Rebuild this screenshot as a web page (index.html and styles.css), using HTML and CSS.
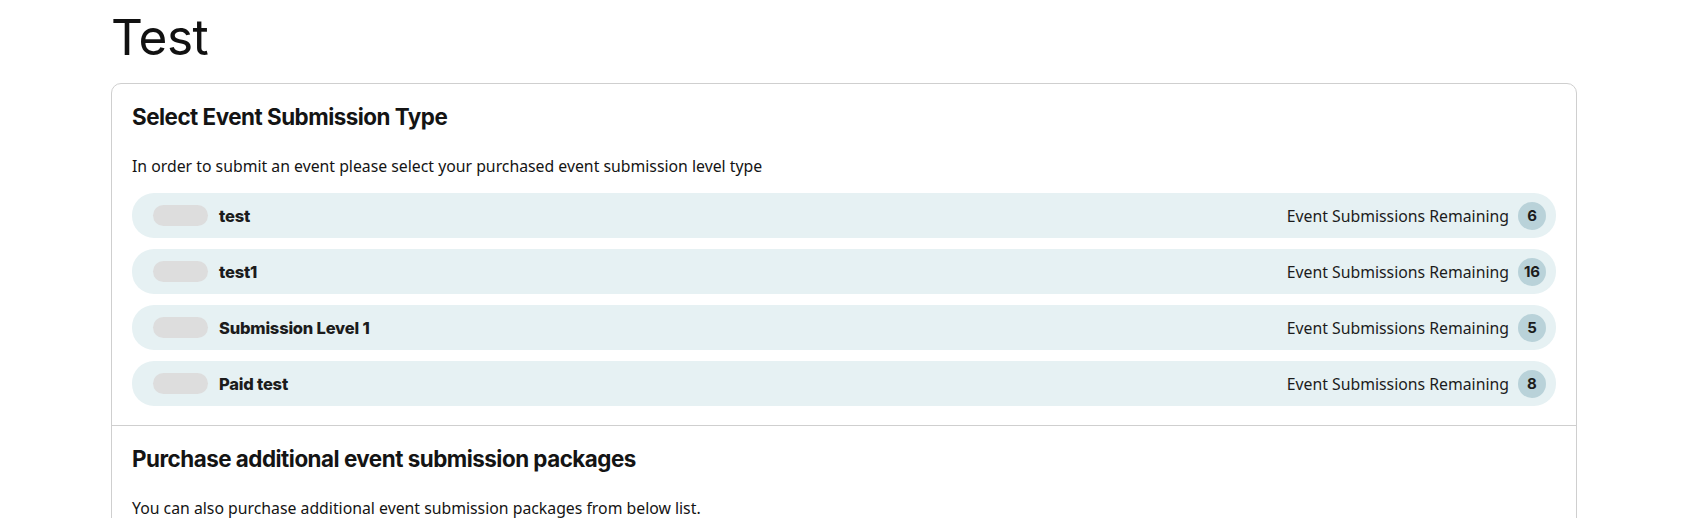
FILE: index.html
```html
<!DOCTYPE html>
<html lang="en">

<head>
  <meta charset="UTF-8" />
  <meta name="viewport" content="width=device-width, initial-scale=1" />
  <title>Test - Event Submission</title>
  <link rel="stylesheet" href="styles.css">
</head>

<body>

  <div class="page">
    <h1 class="page-title">Test</h1>

    <div class="card">
      <!-- Submission types -->
      <section class="card-section">
        <h2>Select Event Submission Type</h2>
        <p>In order to submit an event please select your purchased event submission level type</p>

        <div class="levels">
          <div class="level">
            <span class="toggle"></span>
            <span class="level-name">test</span>
            <span class="remaining">Event Submissions Remaining</span>
            <span class="count">6</span>
          </div>
          <div class="level">
            <span class="toggle"></span>
            <span class="level-name">test1</span>
            <span class="remaining">Event Submissions Remaining</span>
            <span class="count">16</span>
          </div>
          <div class="level">
            <span class="toggle"></span>
            <span class="level-name">Submission Level 1</span>
            <span class="remaining">Event Submissions Remaining</span>
            <span class="count">5</span>
          </div>
          <div class="level">
            <span class="toggle"></span>
            <span class="level-name">Paid test</span>
            <span class="remaining">Event Submissions Remaining</span>
            <span class="count">8</span>
          </div>
        </div>
      </section>

      <!-- Packages -->
      <section class="card-section">
        <h2>Purchase additional event submission packages</h2>
        <p>You can also purchase additional event submission packages from below list.</p>
      </section>
    </div>
  </div>

</body>

</html>
```

FILE: styles.css
```css
* {
  box-sizing: border-box;
}

body {
  margin: 0;
  background: #fff;
  color: #141414;
  font-family: 'Noto Sans', sans-serif;
}

.page {
  padding-left: 111px;
  width: 1577px;
}

.page-title {
  font-family: 'Inter', sans-serif;
  font-weight: 400;
  font-size: 49.5px;
  line-height: 62px;
  letter-spacing: -0.5px;
  margin: 6px 0 15px;
  color: #111;
}

/* Card */
.card {
  border: 1px solid #cfcfcf;
  border-radius: 10px;
}

.card-section {
  padding: 20px 20px 19px;
}

.card-section + .card-section {
  border-top: 1px solid #cfcfcf;
}

.card-section h2 {
  font-family: 'Inter', sans-serif;
  font-weight: 700;
  font-size: 22.4px;
  line-height: 26px;
  letter-spacing: -0.5px;
  margin: 0 0 24px;
  color: #141414;
}

.card-section p {
  font-size: 15.8px;
  line-height: 24px;
  margin: 0 0 15px;
}

/* Level rows */
.levels {
  display: flex;
  flex-direction: column;
  gap: 11px;
}

.level {
  display: flex;
  align-items: center;
  height: 45px;
  padding: 0 10px 0 21px;
  background: #e6f1f3;
  border-radius: 22px;
}

.toggle {
  width: 55px;
  height: 21px;
  border-radius: 11px;
  background: #dddddd;
  margin-right: 11px;
}

.level-name {
  font-family: 'Inter', sans-serif;
  font-weight: 800;
  font-size: 16.5px;
  letter-spacing: -0.2px;
  color: #1c1c1c;
  flex: 1;
}

.remaining {
  font-size: 15.8px;
  color: #1c1c1c;
  margin-right: 9px;
}

.count {
  min-width: 28px;
  height: 28px;
  padding: 0 5px;
  border-radius: 14px;
  background: #b9d2d9;
  font-family: 'Inter', sans-serif;
  font-weight: 700;
  font-size: 15px;
  display: flex;
  align-items: center;
  justify-content: center;
  color: #1c1c1c;
}
```
